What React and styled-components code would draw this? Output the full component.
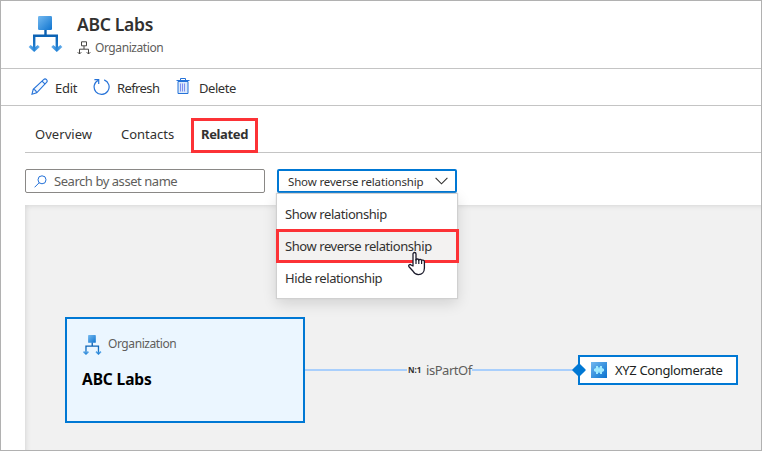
import React from "react";
import styled, { createGlobalStyle } from "styled-components";

const GlobalStyle = createGlobalStyle`
  * { box-sizing: border-box; }
  body { margin: 0; overflow: hidden; background: #fff; }
`;

const Page = styled.div`
  width: 762px;
  height: 451px;
  border: 1px solid #b1b1b1;
  display: flex;
  flex-direction: column;
  background: #fff;
  color: #323130;
  font-family: "Noto Sans", "Open Sans", sans-serif;
  font-size: 13px;
  line-height: 18px;
`;

const Label = styled.span`
  white-space: nowrap;
  letter-spacing: ${(p) => p.$track || 0}px;
`;

const Header = styled.header`
  display: flex;
  height: 68px;
  flex: none;
  padding: 13px 0 0 26px;
  gap: 12px;
  border-bottom: 1px solid #c4c4c4;
`;

const Heading = styled.div`
  display: flex;
  flex-direction: column;
  margin-top: -1px;
`;

const Title = styled.h1`
  margin: 0;
  height: 25px;
  font-size: 17.5px;
  line-height: 22px;
  font-weight: 600;
  letter-spacing: -0.3px;
  white-space: nowrap;
`;

const TypeLine = styled.div`
  display: flex;
  align-items: center;
  gap: 4px;
  height: 20px;
  font-size: 12px;
  color: #605e5c;
`;

const Toolbar = styled.div`
  display: flex;
  height: 37px;
  flex: none;
  padding-left: 29px;
  gap: 14px;
  border-bottom: 1px solid #c4c4c4;
`;

const Command = styled.button`
  display: flex;
  align-items: center;
  width: ${(p) => p.$width}px;
  gap: ${(p) => p.$gap}px;
  padding: 2px 0 0;
  border: 0;
  background: none;
  color: inherit;
  font: inherit;
  svg { flex: none; margin-top: -3px; }
`;

const Body = styled.main`
  flex: 1;
  display: flex;
  flex-direction: column;
  margin-left: 24px;
`;

const Tabs = styled.nav`
  display: flex;
  height: 47px;
  flex: none;
  padding: 12px 0 0 10px;
  border-bottom: 1px solid #c4c4c4;
`;

const Tab = styled.div`
  width: ${(p) => p.$width}px;
  height: 35px;
  padding: 7px 0 0;
  font-weight: ${(p) => (p.$active ? 700 : 400)};
`;

const ActiveTab = styled(Tab)`
  margin-left: -1px;
  padding: 4px 0 0 7px;
  border: 3px solid #fc3236;
`;

const Filters = styled.div`
  display: flex;
  height: 52px;
  flex: none;
  padding-top: 16px;
  gap: 12px;
`;

const Search = styled.div`
  display: flex;
  align-items: center;
  width: 240px;
  height: 24px;
  padding-left: 8px;
  gap: 7px;
  border: 1px solid #8a8886;
  border-radius: 2px;
  color: #605e5c;
  svg { flex: none; }
`;

const Picker = styled.div`
  position: relative;
  width: 180px;
  height: 24px;
`;

const PickerField = styled.div`
  display: flex;
  align-items: center;
  justify-content: space-between;
  height: 24px;
  padding: 1px 7px 0 9px;
  border: 2px solid #0078d4;
  border-radius: 2px;
  font-size: 11.5px;
  svg { margin-top: -1px; }
`;

const Menu = styled.div`
  position: absolute;
  z-index: 3;
  top: 25px;
  left: 0;
  width: 180px;
  height: 104px;
  padding-top: 4px;
  background: #fff;
  box-shadow: 0 0 1px 1px #d0d0d0, 0 5px 14px rgba(0, 0, 0, 0.14);
`;

const MenuItem = styled.div`
  display: flex;
  align-items: center;
  width: ${(p) => (p.$hover ? 181 : 180)}px;
  height: 32px;
  padding-left: 8px;
  background: ${(p) => (p.$hover ? "#f3f2f1" : "transparent")};
  outline: ${(p) => (p.$hover ? "3px solid #fc3236" : "none")};
  outline-offset: -2px;
`;

const Pointer = styled.svg`
  position: absolute;
  z-index: 4;
  top: 82px;
  left: 130px;
`;

const Canvas = styled.section`
  position: relative;
  flex: 1;
  background: #f1f1f1;
  box-shadow: inset 3px 3px 5px -2px #d6d6d6;
`;

const Card = styled.article`
  position: absolute;
  left: 40px;
  top: 112px;
  width: 240px;
  height: 106px;
  padding: 14px 0 0 15px;
  border: 2px solid #0078d4;
  background: #ebf6ff;
`;

const CardType = styled.div`
  display: flex;
  align-items: center;
  height: 22px;
  gap: 5px;
  font-size: 12px;
  color: #605e5c;
`;

const CardTitle = styled.div`
  margin-top: 14px;
  color: #000;
  font-size: 15.5px;
  line-height: 20px;
  font-weight: 700;
  letter-spacing: -0.1px;
`;

const Edge = styled.div`
  position: absolute;
  left: 280px;
  top: 155px;
  width: 274px;
  height: 20px;
  display: flex;
  align-items: center;
  color: #605e5c;
`;

const EdgeLine = styled.i`
  width: ${(p) => p.$width}px;
  height: 2px;
  flex: none;
  background: #a9cffc;
`;

const Cardinality = styled.span`
  width: 19px;
  flex: none;
  padding-left: 1px;
  font-size: 8px;
  font-weight: 700;
  color: #323130;
`;

const EdgeName = styled.span`
  width: 46px;
  flex: none;
  white-space: nowrap;
  font-size: 13px;
  line-height: 18px;
  margin-top: -1px;
  letter-spacing: -0.45px;
`;

const Asset = styled.div`
  position: absolute;
  left: 553px;
  top: 150px;
  width: 160px;
  height: 30px;
  display: flex;
  align-items: center;
  gap: 8px;
  padding-left: 11px;
  border: 2px solid #0078d4;
  background: #fff;
  color: #201f1e;
  svg { flex: none; }
  span { margin-top: -1px; }
`;

const Port = styled.i`
  position: absolute;
  left: -6px;
  top: 8px;
  width: 10px;
  height: 10px;
  background: #0078d4;
  border-radius: 1px;
  transform: rotate(45deg);
`;

function OrgLogo({ size, id }) {
  return (
    <svg width={size} height={size} viewBox="0 0 38 38">
      <defs>
        <linearGradient id={`${id}-node`} x1="0" y1="0" x2="1" y2="1">
          <stop offset="0" stopColor="#74b9f0" />
          <stop offset="1" stopColor="#0f74cf" />
        </linearGradient>
        <linearGradient id={`${id}-arrow`} x1="0" y1="0" x2="1" y2="0">
          <stop offset="0" stopColor="#72b6ef" />
          <stop offset=".5" stopColor="#2383d7" />
          <stop offset="1" stopColor="#72b6ef" />
        </linearGradient>
        <linearGradient id={`${id}-stem`} gradientUnits="userSpaceOnUse" x1="0" y1="20" x2="0" y2="36">
          <stop offset="0" stopColor="#0a5fb0" />
          <stop offset="1" stopColor="#2383d7" />
        </linearGradient>
      </defs>
      <path d="M18.5 15v6M7.2 34V21.8h22.6V34" fill="none" stroke={`url(#${id}-stem)`} strokeWidth="2.4" />
      <path d="M1.6 33l2-2.1 3.6 2.9 3.6-2.9 2 2.1-5.6 5z" fill={`url(#${id}-arrow)`} />
      <path d="M24.2 33l2-2.1 3.6 2.9 3.6-2.9 2 2.1-5.6 5z" fill={`url(#${id}-arrow)`} />
      <rect x="11" y="2" width="14" height="14" rx="1.2" fill={`url(#${id}-node)`} />
    </svg>
  );
}

function OrgOutline() {
  return (
    <svg width="14" height="14" viewBox="0 0 14 14" fill="none" stroke="#484644">
      <path d="M4.5 .8h5v4h-5zM7 5v3M2.5 13V8.2h9V13" />
      <path d="M.7 11.2l1.8 1.8 1.8-1.8M9.7 11.2l1.8 1.8 1.8-1.8" />
    </svg>
  );
}

function PencilIcon() {
  return (
    <svg width="19" height="18" viewBox="0 0 19 18" fill="none" stroke="#2572d8" strokeWidth="1.1">
      <path d="M2 16.2l1.2-4.9L13.6 1.6c1-.9 2.1-.8 2.9 0 .8.8.9 1.9 0 2.8L6.7 14.8z" fill="#f4f9ff" />
      <path d="M12 3.1l3.1 3.1M3.2 11.3c1.7.3 3.1 1.7 3.5 3.5" />
    </svg>
  );
}

function RefreshIcon() {
  return (
    <svg width="18" height="18" viewBox="0 0 18 18" fill="none" stroke="#2572d8" strokeWidth="1.2">
      <path d="M11.2 1.9A7.5 7.5 0 1 1 5.3 2.2" />
      <path d="M1.4 1.6h4.3v4.5" />
    </svg>
  );
}

function TrashIcon() {
  return (
    <svg width="14" height="17" viewBox="0 0 14 17" fill="none" stroke="#2572d8">
      <path d="M2 3.5h10v12H2z" fill="#dbe9fb" />
      <path d="M.5 2.5h13M4.5 2.5v-2h5v2" />
      <path d="M4.5 5.5v8M6.5 5.5v8M8.5 5.5v8" stroke="#7d8ff0" />
    </svg>
  );
}

function SearchIcon() {
  return (
    <svg width="13" height="13" viewBox="0 0 13 13" fill="none" stroke="#2572d8">
      <circle cx="8" cy="4.8" r="4" />
      <path d="M5.2 7.7L.6 12.3" />
    </svg>
  );
}

function AssetIcon() {
  return (
    <svg width="16" height="16" viewBox="0 0 16 16">
      <defs>
        <linearGradient id="asset" x1="0" y1="0" x2="1" y2="1">
          <stop offset="0" stopColor="#72b7ef" />
          <stop offset="1" stopColor="#0872cf" />
        </linearGradient>
      </defs>
      <path d="M0 0h16v16H0z" fill="url(#asset)" />
      <path d="M5 4h2v1h2V4h2v2l2 1v2l-2 1v2H9v-1H7v1H5v-2L3 9V7l2-1z" fill="#9feaff" />
      <path d="M8 5v1.3M8 9.7v1.3" stroke="#4ba6e6" />
    </svg>
  );
}

export default function App() {
  return (
    <>
      <GlobalStyle />
      <Page>
        <Header>
          <OrgLogo size={38} id="header" />
          <Heading>
            <Title>ABC Labs</Title>
            <TypeLine>
              <OrgOutline />
              <Label $track={-0.42}>Organization</Label>
            </TypeLine>
          </Heading>
        </Header>
        <Toolbar>
          <Command $width={49} $gap={6}>
            <PencilIcon />
            <Label $track={-0.25}>Edit</Label>
          </Command>
          <Command $width={69} $gap={6}>
            <RefreshIcon />
            <Label $track={-0.6}>Refresh</Label>
          </Command>
          <Command $width={62} $gap={9}>
            <TrashIcon />
            <Label $track={-0.45}>Delete</Label>
          </Command>
        </Toolbar>
        <Body>
          <Tabs>
            <Tab $width={86}><Label $track={0.05}>Overview</Label></Tab>
            <Tab $width={71}><Label>Contacts</Label></Tab>
            <ActiveTab $width={67} $active><Label $track={-0.35}>Related</Label></ActiveTab>
          </Tabs>
          <Filters>
            <Search>
              <SearchIcon />
              <Label $track={-0.45}>Search by asset name</Label>
            </Search>
            <Picker>
              <PickerField>
                <Label $track={-0.15}>Show reverse relationship</Label>
                <svg width="13" height="8" viewBox="0 0 13 8" fill="none" stroke="#323130" strokeWidth="1.1">
                  <path d="M.6 .8l5.9 6 5.9-6" />
                </svg>
              </PickerField>
              <Menu>
                <MenuItem><Label $track={-0.42}>Show relationship</Label></MenuItem>
                <MenuItem $hover><Label $track={-0.43}>Show reverse relationship</Label></MenuItem>
                <MenuItem><Label $track={-0.42}>Hide relationship</Label></MenuItem>
              </Menu>
              <Pointer width="20" height="25" viewBox="0 0 20 25">
                <path
                  d="M6 15V3c0-2 3-2 3 0v6c0-1.4 2.8-1.4 2.8.3 0-1.3 2.8-1.2 2.8.5 0-1.2 2.8-1 2.8.9V17c0 4-2.4 6.6-6 6.6-3 0-4.3-1.6-5.3-3.4L2 15.7c-1-1.7 1-2.8 2.1-1.7z"
                  fill="#fff" stroke="#1b1b2b" strokeWidth="1.3" strokeLinejoin="round"
                />
                <path d="M9 8v5M11.8 9v4M14.6 10v3" stroke="#1b1b2b" strokeWidth="1.2" />
              </Pointer>
            </Picker>
          </Filters>
          <Canvas>
            <Card>
              <CardType>
                <OrgLogo size={21} id="card" />
                <Label $track={-0.42}>Organization</Label>
              </CardType>
              <CardTitle>ABC Labs</CardTitle>
            </Card>
            <Edge>
              <EdgeLine $width={102} />
              <Cardinality>N:1</Cardinality>
              <EdgeName>isPartOf</EdgeName>
              <EdgeLine $width={107} />
            </Edge>
            <Asset>
              <Port />
              <AssetIcon />
              <Label $track={-0.35}>XYZ Conglomerate</Label>
            </Asset>
          </Canvas>
        </Body>
      </Page>
    </>
  );
}
